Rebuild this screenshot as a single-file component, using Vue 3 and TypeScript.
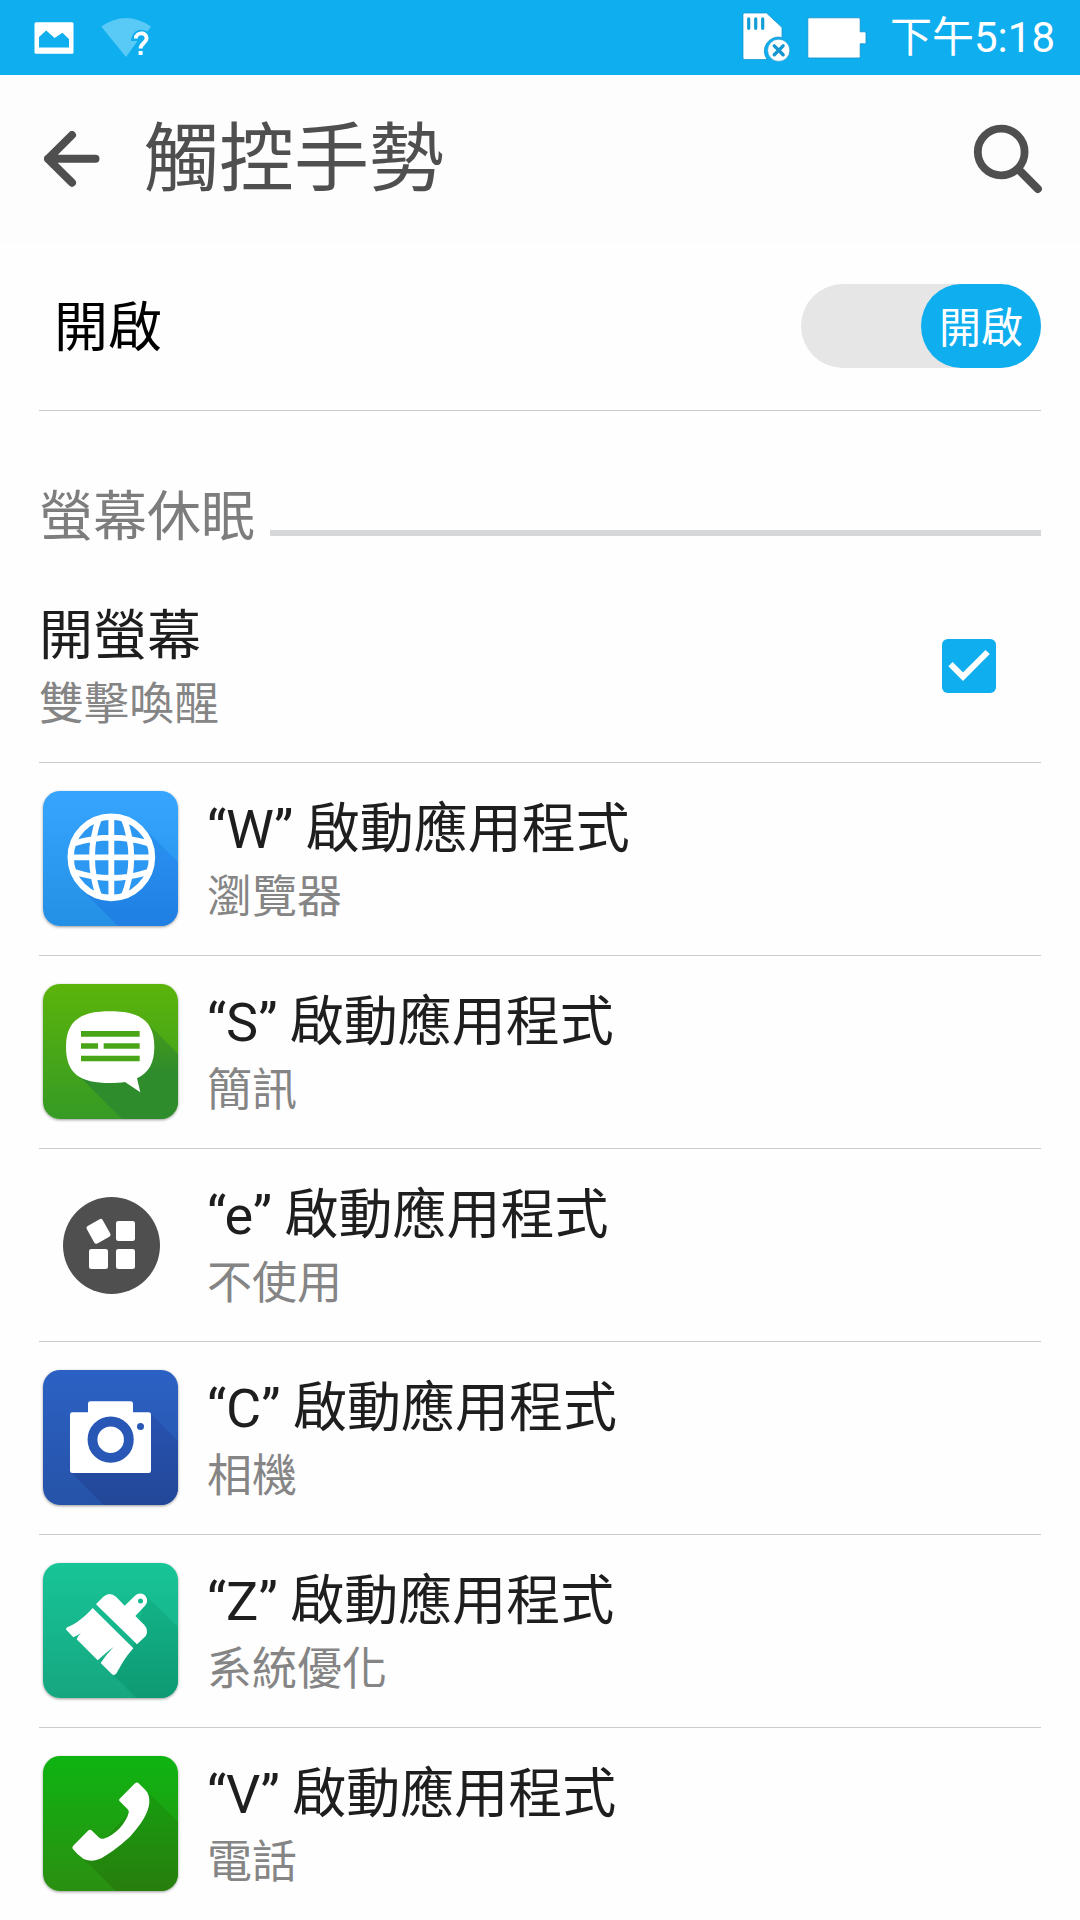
<script setup lang="ts">
import { ref } from 'vue'

type IconName = 'browser' | 'messages' | 'none' | 'camera' | 'cleanup' | 'phone'

interface Gesture {
  letter: string
  app: string
  icon: IconName
}

const enabled = ref(true)
const wake = ref(true)

const gestures: Gesture[] = [
  { letter: 'W', app: '瀏覽器', icon: 'browser' },
  { letter: 'S', app: '簡訊', icon: 'messages' },
  { letter: 'e', app: '不使用', icon: 'none' },
  { letter: 'C', app: '相機', icon: 'camera' },
  { letter: 'Z', app: '系統優化', icon: 'cleanup' },
  { letter: 'V', app: '電話', icon: 'phone' },
]
</script>

<template>
  <div class="screen">
    <header class="status">
      <svg class="s-picture" viewBox="34 22 40 32" width="40" height="32">
        <rect x="34.5" y="22.2" width="39" height="31.6" rx="1.5" fill="#fff" />
        <path d="M39 47.6V37l7.2-6.6 8.4 7.6 7.8-5.2 6.6 6.2v8.6z" fill="#0faeef" />
      </svg>
      <svg class="s-wifi" viewBox="100 17 52 42" width="52" height="42">
        <path d="M101.200 26.500Q126 9.500 151 26.500L147.500 31.500Q141 28 135.500 31.500Q131.500 34.500 131 41H137.500L126 57Z" fill="#59c9f6" />
        <path d="M135.800 38.500C136 31.800 146.600 31.500 146.600 38.200C146.600 43 140.600 43.200 140.600 48.600" fill="none" stroke="#fff" stroke-width="3.900" />
        <rect x="138.600" y="51" width="4" height="4" fill="#fff" />
      </svg>
      <span class="grow"></span>
      <svg class="s-sd" viewBox="742 12 50 50" width="50" height="50">
        <path d="M744.500 13H766.500L782 27.500V37.500A14 14 0 0 0 767.200 59.500H744.500Q743 59.500 743 58V14.500Q743 13 744.500 13Z" fill="#fff" stroke="#0b8fca" stroke-width=".7" />
        <path d="M748.700 18.800v9.500M755.700 18.800v9.500M762.700 18.800v9.500" stroke="#139ed8" stroke-width="3.200" stroke-linecap="round" />
        <circle cx="778.700" cy="50.300" r="11.100" fill="#fff" stroke="#0b8fca" stroke-width=".6" />
        <path d="M774.300 45.900l8.800 8.800M783.100 45.900l-8.800 8.800" stroke="#1497d0" stroke-width="3.400" stroke-linecap="round" />
      </svg>
      <svg class="s-battery" viewBox="807 17 60 42" width="60" height="42">
        <path d="M809 17.800H859Q860.200 17.800 860.200 19V31.800H864.800Q866 31.800 866 33V42.600Q866 43.800 864.800 43.800H860.200V56.800Q860.200 58 859 58H809Q807.800 58 807.800 56.800V19Q807.800 17.800 809 17.800Z" fill="#fff" stroke="#0b8fca" stroke-width=".8" />
      </svg>
      <span class="clock">下午5:18</span>
    </header>

    <div class="toolbar">
      <svg class="back" viewBox="44 131 56 57" width="56" height="57">
        <path d="M72 135L48 158.800L72 182.700M48 158.800H95.500" fill="none" stroke="#4f4f4f" stroke-width="8" stroke-linecap="round" stroke-linejoin="round" />
      </svg>
      <h1>觸控手勢</h1>
      <svg class="search" viewBox="973 124 70 70" width="70" height="70">
        <circle cx="1001.200" cy="152" r="23.400" fill="none" stroke="#4f4f4f" stroke-width="7.800" />
        <path d="M1018.500 169.500L1037.800 188.800" stroke="#4f4f4f" stroke-width="8.200" stroke-linecap="round" />
      </svg>
    </div>

    <section class="master">
      <span class="label">開啟</span>
      <button class="switch" :class="{ on: enabled }" @click="enabled = !enabled">
        <span class="thumb">{{ enabled ? '開啟' : '關閉' }}</span>
      </button>
    </section>

    <div class="category">
      <h2>螢幕休眠</h2>
      <i></i>
    </div>

    <ul class="list">
      <li class="row wake">
        <div class="text">
          <p class="title">開螢幕</p>
          <p class="sub">雙擊喚醒</p>
        </div>
        <svg class="check" viewBox="0 0 162 162" width="54" height="54" @click="wake = !wake">
          <rect width="162" height="162" rx="17" fill="#0faeef" />
          <path v-if="wake" d="M25.500 75.500L63 113L137 39" fill="none" stroke="#fff" stroke-width="18" />
        </svg>
      </li>

      <li v-for="g in gestures" :key="g.letter" class="row">
        <svg v-if="g.icon === 'browser'" class="icon tile" viewBox="39 33 405 405">
          <defs>
            <linearGradient id="gb" x1="0" y1="0" x2="0" y2="1"><stop offset="0" stop-color="#37a5ff" /><stop offset="1" stop-color="#2390e4" /></linearGradient>
            <linearGradient id="sb" x1="0" y1="0" x2="0" y2="1"><stop offset="0" stop-color="#2a92f2" /><stop offset="1" stop-color="#1f7fe2" /></linearGradient>
          </defs>
          <rect x="39" y="33" width="405" height="405" fill="url(#gb)" />
          <path d="M337 139L444 246V438H264L151 325Z" fill="url(#sb)" />
          <circle cx="244" cy="232" r="123" fill="#2d98f2" />
          <g fill="none" stroke="#fff" stroke-width="17.500">
            <circle cx="244" cy="232" r="122" stroke-width="19" />
            <path d="M244 109V355M121 232H367M208 112Q164 232 208 352M280 112Q328 232 280 352M134 190Q244 156 354 190M134 276Q244 312 354 276" />
          </g>
        </svg>

        <svg v-else-if="g.icon === 'messages'" class="icon tile" viewBox="39 42 405 405">
          <defs>
            <linearGradient id="gm" x1="0" y1="0" x2="0" y2="1"><stop offset="0" stop-color="#5bb40a" /><stop offset="1" stop-color="#369a25" /></linearGradient>
            <linearGradient id="sm" x1="0" y1="0" x2="0" y2="1"><stop offset="0" stop-color="#459c18" /><stop offset=".5" stop-color="#2f8c2c" /></linearGradient>
          </defs>
          <rect x="39" y="42" width="405" height="405" fill="url(#gm)" />
          <path d="M358 165L444 251V447H276L150 321Z" fill="url(#sm)" />
          <path d="M240 124C330 124 373 152 373 231C373 278 357 308 321 325L331 367L285 336C272 338 256 339 240 339C151 339 108 312 108 231C108 152 151 124 240 124Z" fill="#fff" />
          <path d="M153 191.500H329M153 228H204M221 228H329M153 265.500H329" stroke="#48a518" stroke-width="17" />
        </svg>

        <svg v-else-if="g.icon === 'none'" class="icon" viewBox="39 51 405 405">
          <circle cx="244.500" cy="256.500" r="145.500" fill="#4f4f4f" />
          <g fill="#fff">
            <rect x="258" y="183" width="57" height="60" rx="7" />
            <rect x="177" y="267" width="57" height="60" rx="7" />
            <rect x="258" y="267" width="57" height="60" rx="7" />
            <rect x="178" y="184" width="55" height="60" rx="7" transform="rotate(-29 205.500 214)" />
          </g>
        </svg>

        <svg v-else-if="g.icon === 'camera'" class="icon tile" viewBox="39 30 405 405">
          <defs>
            <linearGradient id="gc" x1="0" y1="0" x2="0" y2="1"><stop offset="0" stop-color="#2c61c4" /><stop offset="1" stop-color="#2553a8" /></linearGradient>
            <linearGradient id="sc" x1="0" y1="0" x2="0" y2="1"><stop offset="0" stop-color="#2753b0" /><stop offset="1" stop-color="#224798" /></linearGradient>
          </defs>
          <rect x="39" y="30" width="405" height="405" fill="url(#gc)" />
          <path d="M361 159L444 242V435H221L122 336Z" fill="url(#sc)" />
          <path d="M181 124H302Q309 124 309 131V157H356Q363 157 363 164V332Q363 339 356 339H127Q120 339 120 332V164Q120 157 127 157H174V131Q174 124 181 124Z" fill="#fff" />
          <circle cx="242" cy="239" r="54.500" fill="#fff" stroke="#2857b5" stroke-width="29.500" />
          <circle cx="331.500" cy="199.500" r="10.500" fill="#2857b5" />
        </svg>

        <svg v-else-if="g.icon === 'cleanup'" class="icon tile" viewBox="39 39 405 405">
          <defs>
            <linearGradient id="gz" x1="0" y1="0" x2="0" y2="1"><stop offset="0" stop-color="#17c597" /><stop offset="1" stop-color="#16a680" /></linearGradient>
            <linearGradient id="sz" x1="0" y1="0" x2="0" y2="1"><stop offset="0" stop-color="#13b388" /><stop offset="1" stop-color="#0e9a73" /></linearGradient>
          </defs>
          <rect x="39" y="39" width="405" height="405" fill="url(#gz)" />
          <path d="M347 135L444 232V444H319L249 374L309 293Z" fill="url(#sz)" />
          <path d="M198 163L220 140Q239 124 258 140L284 167L315 137C328 125 344 131 349 142C353 151 352 160 345 167L316 198L343 225Q356 240 348 257L321 283Z" fill="#fff" />
          <circle cx="331.500" cy="153" r="7.500" fill="#14b88e" />
          <path d="M188 174L310 295C285 322 270 352 260 369Q253 378 246 373L212 339C226 318 238 305 251 291C235 302 219 316 203 331L140 268Q145 256 153 249Q142 257 130 262L110 241Q105 235 113 231C138 222 165 200 188 174Z" fill="#fff" />
        </svg>

        <svg v-else class="icon tile" viewBox="39 33 405 405">
          <defs>
            <linearGradient id="gp" x1="0" y1="0" x2="0" y2="1"><stop offset="0" stop-color="#0eb412" /><stop offset="1" stop-color="#2b8f11" /></linearGradient>
            <linearGradient id="sp" x1="0" y1="0" x2="0" y2="1"><stop offset="0" stop-color="#179d10" /><stop offset="1" stop-color="#287e0d" /></linearGradient>
          </defs>
          <rect x="39" y="33" width="405" height="405" fill="url(#gp)" />
          <path d="M355 142L444 231V438H257L165 346Z" fill="url(#sp)" />
          <path d="M325 114L347 136Q359 149 358 174C355 204 334 238 300 275C268 304 230 333 206 343Q184 352 161 342Q142 329 128 311Q126 307 129 303L174 257Q180 252 186 257L206 277Q212 283 221 281C257 269 288 234 296 203Q298 198 293 193L269 169Q265 165 269 161L315 115Q320 110 325 114Z" fill="#fff" />
        </svg>

        <div class="text">
          <p class="title">“{{ g.letter }}” 啟動應用程式</p>
          <p class="sub">{{ g.app }}</p>
        </div>
      </li>
    </ul>
  </div>
</template>

<style>
body {
  margin: 0;
  background: #fefefe;
}
</style>

<style scoped>
.screen {
  width: 1080px;
  height: 1920px;
  overflow: hidden;
  background: #fefefe;
  color: #1e1e1e;
  font-family: Roboto, 'Noto Sans CJK TC', sans-serif;
}
svg {
  display: block;
  flex: none;
}
h1, h2, p, ul {
  margin: 0;
  padding: 0;
  font-weight: 400;
}
.status {
  display: flex;
  align-items: flex-start;
  height: 75px;
  box-sizing: border-box;
  padding: 0 26px 0 34px;
  background: #0faeef;
}
.s-picture { margin-top: 22px; }
.s-wifi { margin: 17px 0 0 26px; }
.grow { flex: 1; }
.s-sd { margin-top: 12px; }
.s-battery { margin: 17px 0 0 15px; }
.clock {
  width: 164px;
  margin-left: 23px;
  color: #fff;
  font-size: 42px;
  line-height: 75px;
  white-space: nowrap;
}
.toolbar {
  display: flex;
  align-items: center;
  height: 168px;
  box-sizing: border-box;
  padding: 0 37px 0 44px;
  background: #fdfdfd;
}
.toolbar h1 {
  flex: 1;
  margin-left: 44px;
  font-size: 75px;
  line-height: 100px;
  color: #4f4f4f;
}
.master {
  display: flex;
  align-items: center;
  justify-content: space-between;
  height: 167px;
  margin: 0 39px;
  padding-left: 15px;
  border-bottom: 1px solid #ccc;
  font-size: 54px;
  color: #000;
}
.label { padding-bottom: 6px; }
.switch {
  display: flex;
  width: 240px;
  height: 84px;
  margin-bottom: 2px;
  padding: 0;
  border: 0;
  border-radius: 42px;
  background: #e6e6e6;
  font-family: inherit;
}
.switch.on { justify-content: flex-end; }
.thumb {
  box-sizing: border-box;
  width: 120px;
  height: 84px;
  padding-top: 3px;
  border-radius: 40px / 42px;
  background: #0faeef;
  color: #fff;
  font-size: 42px;
  line-height: 84px;
  text-align: center;
}
.category {
  display: flex;
  align-items: center;
  height: 159px;
  margin: 0 39px;
}
.category h2 {
  width: 231px;
  padding-top: 55px;
  font-size: 54px;
  line-height: 74px;
  color: #7d7d7d;
  white-space: nowrap;
}
.category i {
  flex: 1;
  height: 6px;
  margin-top: 85px;
  background: #d6d7d9;
}
.list {
  margin: 0 39px;
  list-style: none;
}
.row {
  display: flex;
  align-items: center;
  height: 192px;
  border-bottom: 1px solid #ccc;
}
.row:last-child { border-bottom: 0; }
.wake { justify-content: space-between; }
.check { margin-right: 45px; }
.icon {
  width: 135px;
  height: 135px;
  margin: 0 29px 1px 4px;
}
.tile {
  border-radius: 17px;
  box-shadow: 0 1px 3px rgba(0, 0, 0, 0.4);
}
.text { padding-top: 4px; }
.title {
  font-size: 54px;
  line-height: 74px;
  white-space: nowrap;
  word-spacing: -1px;
}
.sub {
  font-size: 45px;
  line-height: 62px;
  color: #858585;
}
</style>
